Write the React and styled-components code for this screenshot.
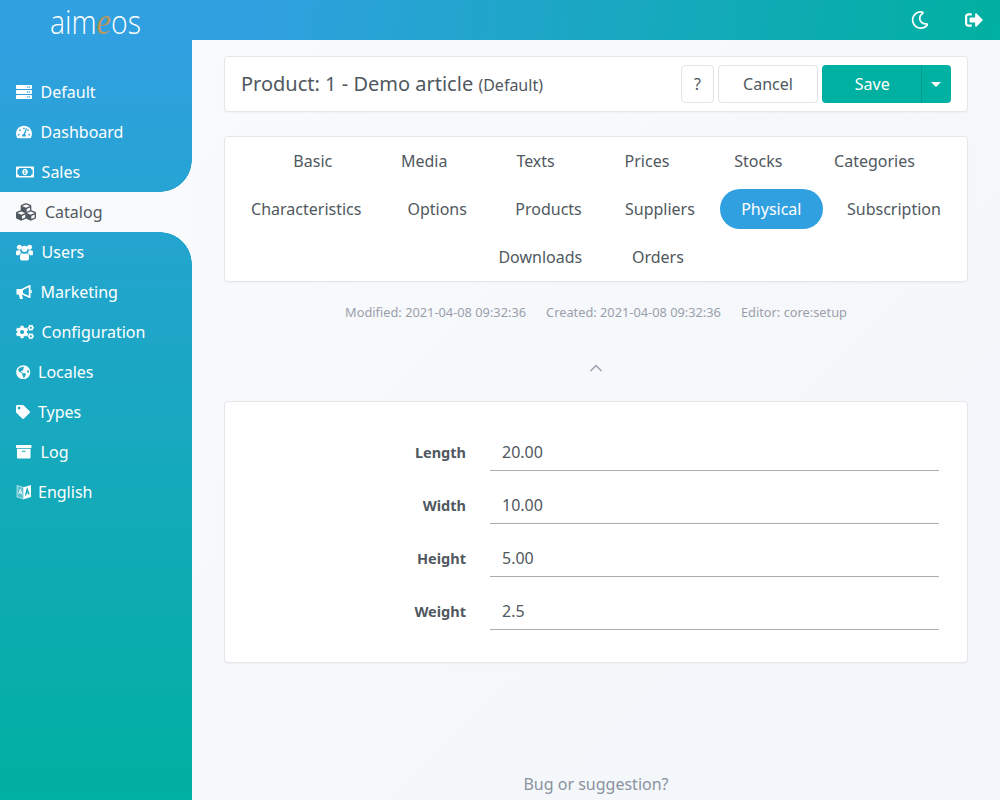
import styled, { createGlobalStyle } from 'styled-components';
import {
  FaServer,
  FaTachometerAlt,
  FaRegMoneyBillAlt,
  FaCubes,
  FaCogs,
  FaGlobeAmericas,
  FaTag,
  FaArchive,
  FaRegMoon,
  FaSignOutAlt,
} from 'react-icons/fa';

const GlobalStyle = createGlobalStyle`
  html, body {
    margin: 0;
    padding: 0;
    height: 800px;
    overflow: hidden;
  }
  body {
    font-family: 'Noto Sans', sans-serif;
    font-size: 16px;
    color: #505860;
    background: #f8fafc;
  }
  * {
    box-sizing: border-box;
  }
`;

const Page = styled.div`
  display: grid;
  grid-template-columns: 192px 1fr;
  grid-template-rows: 40px 760px;
  width: 1000px;
  height: 800px;
  background: linear-gradient(135deg, #f9fbfd, #f3f6fa);
`;

const TopBar = styled.header`
  grid-column: 1 / 3;
  grid-row: 1;
  display: flex;
  align-items: center;
  justify-content: space-between;
  background: linear-gradient(100deg, #30a0e0 0%, #30a0e0 25%, #00b0a0 100%);
`;

const Logo = styled.div`
  width: 192px;
  height: 40px;
  padding: 3px 0 0 50px;
  font-family: 'Open Sans', sans-serif;
  font-weight: 300;
  font-size: 33px;
  line-height: 37px;
  color: #fff;
  white-space: nowrap;
  transform: scaleX(0.86);
  transform-origin: 50px 0;

  em {
    font-family: 'Liberation Serif', serif;
    font-size: 38px;
    line-height: 30px;
    color: #b8965c;
  }
`;

const TopIcons = styled.div`
  display: flex;
  align-items: center;
  gap: 36px;
  padding-right: 17px;
  color: #fff;
  font-size: 18px;
  svg {
    display: block;
  }
`;

const Sidebar = styled.nav`
  grid-column: 1;
  grid-row: 2;
  display: flex;
  flex-direction: column;
  padding-top: 32px;
  background: linear-gradient(180deg, #30a0e0 0%, #00b0a0 100%);
`;

const NavItem = styled.a`
  position: relative;
  display: flex;
  align-items: center;
  height: 40px;
  padding-left: 16px;
  color: ${(p) => (p.$active ? '#505860' : '#fff')};
  background: ${(p) => (p.$active ? '#f8fafc' : 'transparent')};

  ${(p) =>
    p.$active &&
    `
    &::before, &::after {
      content: '';
      position: absolute;
      right: 0;
      width: 32px;
      height: 32px;
    }
    &::before {
      top: -32px;
      background: radial-gradient(circle at 0 0, transparent 31.5px, #f8fafc 32px);
    }
    &::after {
      bottom: -32px;
      background: radial-gradient(circle at 0 100%, transparent 31.5px, #f8fafc 32px);
    }
  `}
`;

const NavIcon = styled.span`
  display: flex;
  align-items: center;
  flex-shrink: 0;
  width: ${(p) => p.$slot}px;
`;

const Main = styled.main`
  grid-column: 2;
  grid-row: 2;
  display: flex;
  flex-direction: column;
  padding: 16px 32px 0;
`;

const Card = styled.div`
  background: #fff;
  border: 1px solid #e4e6ea;
  border-radius: 4px;
  box-shadow: 0 1px 2px rgba(0, 0, 0, 0.04);
`;

const TitleCard = styled(Card)`
  display: flex;
  align-items: center;
  justify-content: space-between;
  height: 56px;
  padding: 0 16px;
`;

const Title = styled.h1`
  margin: 0 0 2px;
  font-size: 20px;
  font-weight: 400;
  small {
    font-size: 16px;
  }
`;

const Actions = styled.div`
  display: flex;
  gap: 4px;
`;

const Button = styled.button`
  height: 38px;
  width: ${(p) => p.$width}px;
  font: inherit;
  color: inherit;
  background: #fff;
  border: 1px solid #e0e2e6;
  border-radius: 4px;
  padding: 0;
`;

const SaveGroup = styled.div`
  display: flex;
  height: 38px;
  border-radius: 4px;
  overflow: hidden;
  background: #00b0a0;
  color: #fff;
`;

const SaveButton = styled.button`
  width: 100px;
  border: 0;
  padding: 0 0 0 1.5px;
  font: inherit;
  color: inherit;
  background: transparent;
  border-right: 1px solid #029a8c;
`;

const Caret = styled.button`
  width: 29px;
  border: 0;
  padding: 0 1px 0 0;
  background: transparent;
  display: flex;
  align-items: center;
  justify-content: center;
  &::after {
    content: '';
    border-top: 5px solid #fff;
    border-left: 5px solid transparent;
    border-right: 5px solid transparent;
  }
`;

const TabsCard = styled(Card)`
  display: flex;
  flex-wrap: wrap;
  justify-content: center;
  margin-top: 24px;
  height: 146px;
`;

const Tab = styled.a`
  display: flex;
  align-items: center;
  justify-content: center;
  height: 40px;
  min-width: 103.4px;
  margin: 4px;
  padding: 0 16px;
  border-radius: 20px;
  color: ${(p) => (p.$active ? '#fff' : '#505860')};
  background: ${(p) => (p.$active ? '#30a0e0' : 'transparent')};
`;

const Meta = styled.div`
  display: flex;
  justify-content: center;
  gap: 20px;
  margin-top: 21px;
  font-size: 12.8px;
  line-height: 18px;
  color: #9aa0ab;
`;

const Collapse = styled.div`
  display: flex;
  justify-content: center;
  margin-top: 39px;
  height: 16px;
  color: #9aa0ab;
`;

const FormCard = styled(Card)`
  display: flex;
  flex-direction: column;
  gap: 15px;
  margin-top: 25px;
  padding: 31px 28px 0 16px;
  height: 262px;
`;

const Row = styled.div`
  display: grid;
  grid-template-columns: 225px 1fr;
  column-gap: 24px;
  align-items: center;
  height: 38px;
`;

const Label = styled.label`
  text-align: right;
  font-size: 14.5px;
  font-weight: 700;
`;

const Value = styled.div`
  height: 38px;
  line-height: 38px;
  padding: 0 12px;
  border-bottom: 1px solid #a8acb2;
`;

const Footer = styled.div`
  margin-top: 110px;
  text-align: center;
  color: #8a92a0;
`;

function UsersIcon({ size }) {
  return (
    <svg width={size} height={size} viewBox="0 0 18 17" fill="currentColor">
      <circle cx="3.6" cy="2.9" r="2.6" />
      <circle cx="14.4" cy="2.9" r="2.6" />
      <circle cx="9" cy="4.6" r="3.3" />
      <path d="M0 11 V8 Q0 6 2 6 H4.4 Q4.6 8 5.8 9 Q3.8 9.6 3.4 11.5 H1 Q0 11.5 0 11 Z" />
      <path d="M18 11 V8 Q18 6 16 6 H13.6 Q13.4 8 12.2 9 Q14.2 9.6 14.6 11.5 H17 Q18 11.5 18 11 Z" />
      <path d="M4.2 14.5 V12.5 Q4.2 9.4 6.6 9.3 Q9 10.6 11.4 9.3 Q13.8 9.4 13.8 12.5 V14.5 Q13.8 17 11.6 17 H6.4 Q4.2 17 4.2 14.5 Z" />
    </svg>
  );
}

function BullhornIcon({ size }) {
  return (
    <svg width={size} height={size} viewBox="0 0 16 16" fill="currentColor">
      <path
        fillRule="evenodd"
        d="M0.5 5 H5.5 L13.5 1 H14.5 V14 H13.5 L5.8 10.5 L7 15 H4 L2.8 10.5 H0.5 Z M7 5.9 V9.3 L12.8 11.8 V3.3 Z"
      />
      <rect x="14.5" y="6" width="1.3" height="3.2" />
    </svg>
  );
}

function LanguageIcon({ size }) {
  return (
    <svg width={size} height={size} viewBox="0 0 15 16">
      <path d="M0.5 1.5 L7.5 3.5 V15 L0.5 13 Z" fill="currentColor" fillOpacity="0.3" stroke="currentColor" strokeWidth="0.8" strokeOpacity="0.7" />
      <path d="M7 3.2 L14.5 1 V13 L7 15.2 Z" fill="currentColor" />
      <path d="M2.2 10 L3.9 5.5 L5.6 10.5 M2.9 8.6 H5" fill="none" stroke="currentColor" strokeWidth="0.9" />
      <path d="M8.9 11.5 L10.7 5 L12.6 10.5 M9.6 9 H12" fill="none" stroke="#13a6b6" strokeWidth="1.2" />
    </svg>
  );
}

const navItems = [
  { label: 'Default', Icon: FaServer, size: 16, slot: 24.6 },
  { label: 'Dashboard', Icon: FaTachometerAlt, size: 16, slot: 24.6 },
  { label: 'Sales', Icon: FaRegMoneyBillAlt, size: 18, slot: 25.6 },
  { label: 'Catalog', Icon: FaCubes, size: 20, slot: 29, active: true },
  { label: 'Users', Icon: UsersIcon, size: 17, slot: 25.6 },
  { label: 'Marketing', Icon: BullhornIcon, size: 16, slot: 24.6 },
  { label: 'Configuration', Icon: FaCogs, size: 18, slot: 25.6 },
  { label: 'Locales', Icon: FaGlobeAmericas, size: 14.5, slot: 22 },
  { label: 'Types', Icon: FaTag, size: 14, slot: 22 },
  { label: 'Log', Icon: FaArchive, size: 15.5, slot: 24.6 },
  { label: 'English', Icon: LanguageIcon, size: 16, slot: 22 },
];

const tabs = [
  'Basic',
  'Media',
  'Texts',
  'Prices',
  'Stocks',
  'Categories',
  'Characteristics',
  'Options',
  'Products',
  'Suppliers',
  'Physical',
  'Subscription',
  'Downloads',
  'Orders',
];

const fields = [
  ['Length', '20.00'],
  ['Width', '10.00'],
  ['Height', '5.00'],
  ['Weight', '2.5'],
];

function App() {
  return (
    <Page>
      <GlobalStyle />
      <TopBar>
        <Logo>
          aim<em>e</em>os
        </Logo>
        <TopIcons>
          <FaRegMoon />
          <FaSignOutAlt />
        </TopIcons>
      </TopBar>
      <Sidebar>
        {navItems.map(({ label, Icon, size, slot, active }) => (
          <NavItem key={label} $active={active}>
            <NavIcon $slot={slot}>
              <Icon size={size} />
            </NavIcon>
            {label}
          </NavItem>
        ))}
      </Sidebar>
      <Main>
        <TitleCard>
          <Title>
            Product: 1 - Demo article <small>(Default)</small>
          </Title>
          <Actions>
            <Button $width={33}>?</Button>
            <Button $width={100}>Cancel</Button>
            <SaveGroup>
              <SaveButton>Save</SaveButton>
              <Caret />
            </SaveGroup>
          </Actions>
        </TitleCard>
        <TabsCard>
          {tabs.map((tab) => (
            <Tab key={tab} $active={tab === 'Physical'}>
              {tab}
            </Tab>
          ))}
        </TabsCard>
        <Meta>
          <span>Modified: 2021-04-08 09:32:36</span>
          <span>Created: 2021-04-08 09:32:36</span>
          <span>Editor: core:setup</span>
        </Meta>
        <Collapse>
          <svg width="14" height="16" viewBox="0 0 14 16" fill="none" stroke="currentColor" strokeWidth="1.5">
            <path d="M1.5 11 L7 5.5 L12.5 11" />
          </svg>
        </Collapse>
        <FormCard>
          {fields.map(([label, value]) => (
            <Row key={label}>
              <Label>{label}</Label>
              <Value>{value}</Value>
            </Row>
          ))}
        </FormCard>
        <Footer>Bug or suggestion?</Footer>
      </Main>
    </Page>
  );
}

export default App;
